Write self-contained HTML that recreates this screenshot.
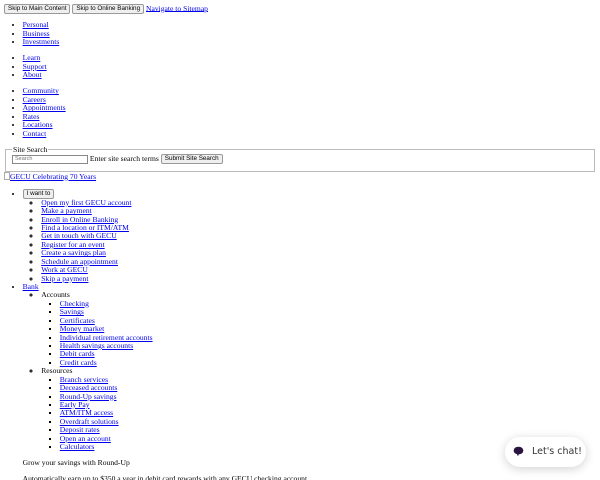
<!DOCTYPE html>
<html><head><meta charset="utf-8">
<style>
html,body{margin:0;padding:0;background:#fff;overflow:hidden;width:600px;height:480px}
#z{font-family:"Liberation Serif",serif;font-size:7.6px;line-height:8.42px;color:#000;padding:3.5px 4px 0 4px}
a{color:#0000ee}
ul{margin:7.8px 0;padding-left:18.6px;list-style:disc}
ul ul{margin:0;list-style:circle}
ul ul ul{list-style:square}
p{margin:7.8px 0}
button{font-family:"Liberation Sans",sans-serif;font-size:6.3px;height:10px;line-height:8px;padding:0 3px;margin:0;vertical-align:middle;border:1px solid #999;border-radius:2px;background:#efefef;color:#000}
fieldset{margin:0 1px;border:1px solid #bbb;padding:0 5px 3px 6px;height:21px}
legend{padding:0 1px;font-size:7.6px}
input{font-size:5.5px;width:70px;height:7px;padding:0 2px;border:1px solid #888;vertical-align:middle;margin:0}
#chat{position:absolute;left:505px;top:437px;width:81px;height:30px;border-radius:15px;background:#fff;box-shadow:0 2px 10px rgba(0,0,0,.18);font-family:"DejaVu Sans","Liberation Sans",sans-serif;font-size:9.5px;color:#333}
#chat span{position:absolute;left:27px;top:9px;white-space:nowrap}
#chat svg{position:absolute;left:8px;top:9px}
</style></head><body>
<div id="z">
<button>Skip to Main Content</button> <button>Skip to Online Banking</button> <a href="#">Navigate to Sitemap</a>
<ul><li><a href="#">Personal</a></li><li><a href="#">Business</a></li><li><a href="#">Investments</a></li></ul>
<ul><li><a href="#">Learn</a></li><li><a href="#">Support</a></li><li><a href="#">About</a></li></ul>
<ul><li><a href="#">Community</a></li><li><a href="#">Careers</a></li><li><a href="#">Appointments</a></li><li><a href="#">Rates</a></li><li><a href="#">Locations</a></li><li><a href="#">Contact</a></li></ul>
<fieldset><legend>Site Search</legend><input placeholder="Search"> Enter site search terms <button>Submit Site Search</button></fieldset>
<div style="height:9px;line-height:9px"><span style="display:inline-block;width:4px;height:6px;border:1px solid #aaa;vertical-align:-1px"></span><a href="#">GECU Celebrating 70 Years</a></div>
<ul><li style="line-height:10px;margin-bottom:-1px"><button>I want to</button></li></ul>
<ul style="margin-top:-7.8px"><li style="list-style:none">
<ul><li><a href="#">Open my first GECU account</a></li><li><a href="#">Make a payment</a></li><li><a href="#">Enroll in Online Banking</a></li><li><a href="#">Find a location or ITM/ATM</a></li><li><a href="#">Get in touch with GECU</a></li><li><a href="#">Register for an event</a></li><li><a href="#">Create a savings plan</a></li><li><a href="#">Schedule an appointment</a></li><li><a href="#">Work at GECU</a></li><li><a href="#">Skip a payment</a></li></ul></li>
<li><a href="#">Bank</a>
<ul><li>Accounts<ul><li><a href="#">Checking</a></li><li><a href="#">Savings</a></li><li><a href="#">Certificates</a></li><li><a href="#">Money market</a></li><li><a href="#">Individual retirement accounts</a></li><li><a href="#">Health savings accounts</a></li><li><a href="#">Debit cards</a></li><li><a href="#">Credit cards</a></li></ul></li>
<li>Resources<ul><li><a href="#">Branch services</a></li><li><a href="#">Deceased accounts</a></li><li><a href="#">Round-Up savings</a></li><li><a href="#">Early Pay</a></li><li><a href="#">ATM/ITM access</a></li><li><a href="#">Overdraft solutions</a></li><li><a href="#">Deposit rates</a></li><li><a href="#">Open an account</a></li><li><a href="#">Calculators</a></li></ul></li></ul>
<p>Grow your savings with Round-Up</p>
<p>Automatically earn up to $350 a year in debit card rewards with any GECU checking account.</p>
</li></ul>
</div>
<div id="chat"><svg width="11" height="11" viewBox="0 0 11 11"><path d="M5.5 0.8C8.3 0.8 10.3 2.5 10.3 4.6C10.3 6.7 8.3 8.3 5.8 8.3L5 10.2L3.9 8.1C2 7.6 0.7 6.3 0.7 4.6C0.7 2.5 2.7 0.8 5.5 0.8Z" fill="#2a1440"/></svg><span>Let's chat!</span></div>
</body></html>
